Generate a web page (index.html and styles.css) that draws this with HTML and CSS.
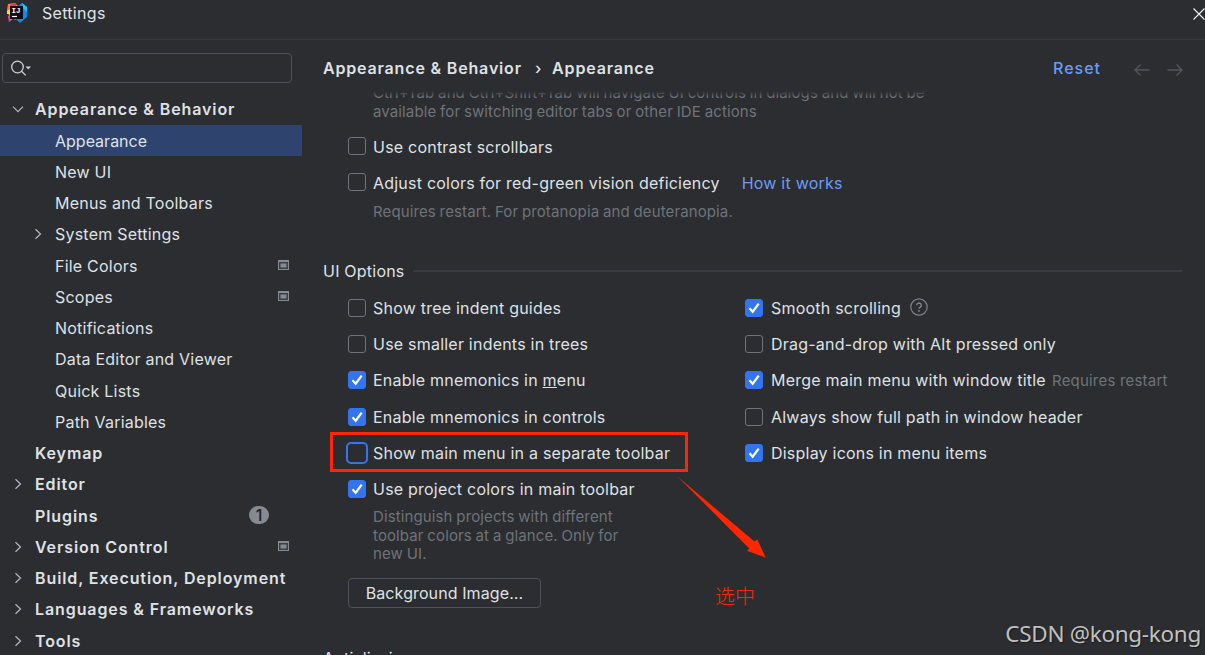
FILE: index.html
```html
<!DOCTYPE html>
<html lang="en">
<head>
    <meta charset="UTF-8">
    <meta name="viewport" content="width=device-width, initial-scale=1.0">
    <title>Settings</title>
    <link rel="stylesheet" href="styles.css">
</head>
<body>

<!-- shared icons -->
<svg class="defs" width="0" height="0">
    <symbol id="right" viewBox="0 0 16 16"><path d="M5.5 3.3 10.5 8 5.5 12.7" fill="none" stroke="#b4b8bf" stroke-width="1.2"/></symbol>
    <symbol id="down" viewBox="0 0 16 16"><path d="M3 5.7 8 10.7 13 5.7" fill="none" stroke="#b4b8bf" stroke-width="1.2"/></symbol>
    <symbol id="project" viewBox="0 0 11 10"><path d="M0 0h11v10H0z" fill="#868a91"/><path d="M1 2h9v7H1z" fill="#3c3f45"/><path d="M2.5 3.5h6v4h-6z" fill="#868a91"/></symbol>
</svg>

<header class="titlebar">
    <svg class="logo" width="20" height="21" viewBox="0 0 20 21">
        <path d="M1 2 8 1l4 4-4 11-6-2L0 8z" fill="#fd8224"/>
        <path d="M4 1 9 1v5H3z" fill="#fe2d72"/>
        <path d="M0 9l4-2v5H0z" fill="#fcdb54"/>
        <path d="M11 4 15 1l5 4v10l-7 6-4-4z" fill="#0b8cf0"/>
        <path d="M15 1l5 4v5l-4-4z" fill="#16c7f5"/>
        <path d="M1 14h9l-1 4-3-1-4 3z" fill="#f846b0"/>
        <path d="M3 4h13v13H3z" fill="#130c10"/>
        <path d="M5 14.500h5" stroke="#fff" stroke-width="1.200"/>
        <text class="logo-text" x="4.500" y="11">IJ</text>
    </svg>
    <span class="title">Settings</span>
    <svg class="close" width="12" height="12" viewBox="0 0 12 12"><path d="M.5.5l11 11M11.500.5l-11 11" stroke="#f0f0f0" stroke-width="1.100"/></svg>
</header>

<div class="window">
    <aside class="sidebar">
        <div class="search">
            <svg width="22" height="18" viewBox="0 0 22 18">
                <circle cx="6.500" cy="7" r="5.800" fill="none" stroke="#ced0d6" stroke-width="1.300"/>
                <path d="M10.500 11.200l4.200 4.200" stroke="#ced0d6" stroke-width="1.300"/>
                <path d="M14.500 6.500h5.500l-2.750 3z" fill="#ced0d6"/>
            </svg>
        </div>
        <ul class="tree">
            <li class="group"><svg class="arrow"><use href="#down"/></svg><span>Appearance &amp; Behavior</span></li>
            <li class="child selected"><span>Appearance</span></li>
            <li class="child"><span>New UI</span></li>
            <li class="child"><span>Menus and Toolbars</span></li>
            <li class="child"><svg class="arrow"><use href="#right"/></svg><span>System Settings</span></li>
            <li class="child"><span>File Colors</span><svg class="project"><use href="#project"/></svg></li>
            <li class="child"><span>Scopes</span><svg class="project"><use href="#project"/></svg></li>
            <li class="child"><span>Notifications</span></li>
            <li class="child"><span>Data Editor and Viewer</span></li>
            <li class="child"><span>Quick Lists</span></li>
            <li class="child"><span>Path Variables</span></li>
            <li class="group"><span>Keymap</span></li>
            <li class="group"><svg class="arrow"><use href="#right"/></svg><span>Editor</span></li>
            <li class="group"><span>Plugins</span><b class="count">1</b></li>
            <li class="group"><svg class="arrow"><use href="#right"/></svg><span>Version Control</span><svg class="project"><use href="#project"/></svg></li>
            <li class="group"><svg class="arrow"><use href="#right"/></svg><span>Build, Execution, Deployment</span></li>
            <li class="group"><svg class="arrow"><use href="#right"/></svg><span>Languages &amp; Frameworks</span></li>
            <li class="group"><svg class="arrow"><use href="#right"/></svg><span>Tools</span></li>
        </ul>
    </aside>

    <main class="page">
        <div class="crumbs">
            <span>Appearance &amp; Behavior</span>
            <span class="sep">›</span>
            <span>Appearance</span>
            <a class="reset" href="#">Reset</a>
            <svg class="nav-arrow" width="16" height="12" viewBox="0 0 16 12"><path d="M15.500 6H1M6.500.5 1 6l5.500 5.500" fill="none" stroke="#54565b" stroke-width="1.300"/></svg>
            <svg class="nav-arrow" width="16" height="12" viewBox="0 0 16 12"><path d="M.5 6H15M9.500.5 15 6l-5.500 5.500" fill="none" stroke="#54565b" stroke-width="1.300"/></svg>
        </div>

        <div class="scroll">
            <p class="hint">Ctrl+Tab and Ctrl+Shift+Tab will navigate UI controls in dialogs and will not be<br>available for switching editor tabs or other IDE actions</p>
            <div class="options top">
                <label class="option"><i class="box"></i><span>Use contrast scrollbars</span></label>
                <label class="option"><i class="box"></i><span>Adjust colors for red-green vision deficiency</span><a class="how" href="#">How it works</a></label>
            </div>
            <p class="hint restart">Requires restart. For protanopia and deuteranopia.</p>

            <h2>UI Options</h2>
            <div class="columns">
                <div class="options">
                    <label class="option"><i class="box"></i><span>Show tree indent guides</span></label>
                    <label class="option"><i class="box"></i><span>Use smaller indents in trees</span></label>
                    <label class="option"><i class="box on"></i><span>Enable mnemonics in <u>m</u>enu</span></label>
                    <label class="option"><i class="box on"></i><span>Enable mnemonics in controls</span></label>
                    <label class="option marked"><i class="box focus"></i><span>Show main menu in a separate toolbar</span></label>
                    <label class="option"><i class="box on"></i><span>Use project colors in main toolbar</span></label>
                </div>
                <div class="options">
                    <label class="option"><i class="box on"></i><span>Smooth scrolling</span>
                        <svg class="help" width="18" height="18" viewBox="0 0 18 18"><circle cx="9" cy="9" r="8.200" fill="none" stroke="#7d8187" stroke-width="1.200"/><path d="M6.700 7.200a2.300 2.200 0 1 1 3.500 1.900c-.8.500-1.200.8-1.200 1.700" fill="none" stroke="#868a91" stroke-width="1.300"/><circle cx="9" cy="12.900" r=".9" fill="#868a91"/></svg>
                    </label>
                    <label class="option"><i class="box"></i><span>Drag-and-drop with Alt pressed only</span></label>
                    <label class="option"><i class="box on"></i><span class="merge">Merge main menu with window title</span><small>Requires restart</small></label>
                    <label class="option"><i class="box"></i><span>Always show full path in window header</span></label>
                    <label class="option"><i class="box on"></i><span>Display icons in menu items</span></label>
                </div>
            </div>
            <p class="hint colors">Distinguish projects with different<br>toolbar colors at a glance. Only for<br>new UI.</p>
            <button class="background">Background Image...</button>
            <h2 class="next">Antialiasing</h2>
        </div>
    </main>
</div>

<!-- annotations over the dialog -->
<svg class="pointer" width="90" height="84" viewBox="0 0 90 84"><path d="M.5.5 77.500 65.500 80.300 63.300 88.700 81.700 69.900 74.700 72.300 72.500z" fill="#ff2600"/></svg>
<div class="note">选中</div>
<div class="watermark">CSDN @kong-kong</div>

</body>
</html>
```

FILE: styles.css
```css
* {
    box-sizing: border-box;
}
body {
    margin: 0;
    width: 1205px;
    height: 655px;
    overflow: hidden;
    position: relative;
    background-color: #2b2d30;
    color: #dfe1e5;
    font-family: Inter, "Noto Sans CJK SC", sans-serif;
    font-size: 16px;
    letter-spacing: 0.22px;
    white-space: nowrap;
}
svg {
    display: block;
    flex: none;
}
a {
    color: #6b9bfa;
    text-decoration: none;
}
.defs {
    position: absolute;
}
.titlebar {
    height: 40px;
    padding: 2px 0 0 7px;
    display: flex;
    align-items: flex-start;
    border-bottom: 1px solid #393b40;
}
.logo-text {
    fill: #fff;
    font: bold 7.5px "Liberation Mono", monospace;
    letter-spacing: 0;
}
.title {
    margin-left: 15px;
    line-height: 23px;
    letter-spacing: 0.3px;
}
.close {
    margin: 6px 0 0 auto;
}
.window {
    display: flex;
    height: 615px;
}

/* tree */
.sidebar {
    width: 302px;
    flex: none;
    padding-top: 13px;
    overflow: hidden;
}
.search {
    width: 290px;
    height: 30px;
    margin-left: 2px;
    padding: 6px 8px;
    border: 1px solid #4e5157;
    border-radius: 4px;
}
.tree {
    list-style: none;
    margin: 10.75px 0 0;
    padding: 0;
}
.tree li {
    height: 31.25px;
    display: flex;
    align-items: center;
}
.tree .group {
    padding-left: 35px;
    font-weight: 600;
    letter-spacing: 0.9px;
}
.tree .child {
    padding-left: 55px;
}
.tree .selected {
    background-color: #2e436e;
    letter-spacing: 0;
}
.arrow {
    width: 16px;
    height: 16px;
    margin-left: -25px;
    margin-right: 9px;
}
.project {
    width: 11px;
    height: 10px;
    margin: 0 13px 1px auto;
}
.count {
    width: 20px;
    height: 18px;
    margin: 0 33px 2px auto;
    border-radius: 9px;
    background-color: #868a91;
    color: #1e1f22;
    font-weight: 500;
    line-height: 19px;
    letter-spacing: 0;
    text-align: center;
}

/* settings page */
.page {
    flex: 1;
    padding-left: 21px;
    display: flex;
    flex-direction: column;
}
.crumbs {
    height: 51px;
    padding: 5px 22px 0 0;
    display: flex;
    align-items: center;
    font-weight: 600;
    letter-spacing: 0.83px;
}
.sep {
    margin: 0 10px 0 13px;
    font-weight: 500;
}
.reset {
    margin-left: auto;
    margin-right: 17px;
    font-weight: 500;
    letter-spacing: 1px;
}
.nav-arrow {
    margin: 4px 0 0 16px;
}
.nav-arrow:last-child {
    margin-left: 17px;
}
.scroll {
    flex: 1;
    position: relative;
    overflow: hidden;
}
.scroll::before {
    content: "";
    position: absolute;
    top: 0;
    left: 0;
    right: 0;
    height: 6px;
    background: linear-gradient(#2b2d30, rgba(43, 45, 48, 0));
}
.hint {
    margin: -7px 0 0 50px;
    color: #6f737a;
    font-size: 15px;
    line-height: 18.5px;
    letter-spacing: 0.12px;
    word-spacing: -0.6px;
}
.options {
    display: flex;
    flex-direction: column;
    padding-left: 25px;
}
.top {
    margin-top: 8px;
}
.option {
    height: 36.2px;
    display: flex;
    align-items: center;
}
.box {
    width: 18px;
    height: 18px;
    flex: none;
    margin-right: 7px;
    border: 1px solid #6f737a;
    border-radius: 3px;
}
.top .box {
    margin-bottom: 2px;
}
.on {
    border-color: #3574f0;
    background: #3574f0 url("data:image/svg+xml,%3Csvg xmlns='http://www.w3.org/2000/svg' viewBox='0 0 16 16'%3E%3Cpath d='M3.500 8.300l3.200 3.400L12.700 3.600' fill='none' stroke='white' stroke-width='2.200'/%3E%3C/svg%3E") center / 16px 16px;
}
.focus {
    width: 22px;
    height: 22px;
    margin: 0 5px 0 -2px;
    border: 2px solid #3574f0;
    border-radius: 5px;
}
.marked {
    position: relative;
}
.marked::after {
    content: "";
    box-sizing: border-box;
    position: absolute;
    left: -18px;
    top: -3px;
    width: 358px;
    height: 40px;
    border: 3px solid #ff2600;
}
.how {
    margin-left: 22px;
}
.restart {
    margin-top: 2px;
}
h2 {
    margin: 38px 23px 0 0;
    height: 22px;
    display: flex;
    align-items: center;
    gap: 8px;
    font-size: 16px;
    font-weight: 400;
}
h2::after {
    content: "";
    flex: 1;
    height: 2px;
    background-color: #393b40;
}
.columns {
    margin-top: 8px;
    display: grid;
    grid-template-columns: 397px 1fr;
}
.columns .options + .options .box {
    margin-right: 8px;
}
.help {
    margin: 0 0 2px 9px;
}
.option small {
    margin-left: 8px;
    color: #6f737a;
    font-size: 15px;
    letter-spacing: 0.2px;
}
.merge {
    width: 273px;
}
.colors {
    margin-top: 1px;
}
.background {
    display: block;
    width: 193px;
    height: 30px;
    margin: 14px 0 0 25px;
    padding: 0;
    border: 1px solid #4e5157;
    border-radius: 4px;
    background: none;
    color: #dfe1e5;
    font: inherit;
    letter-spacing: 0.1px;
}
.next {
    margin-top: 39px;
}

/* annotations */
.pointer {
    position: absolute;
    left: 677px;
    top: 476px;
}
.note {
    position: absolute;
    left: 715px;
    top: 584px;
    color: #ff2600;
    font-family: "Noto Sans CJK SC", sans-serif;
    font-size: 20px;
    font-weight: 300;
    line-height: 24px;
    letter-spacing: 0;
}
.watermark {
    position: absolute;
    right: 4px;
    bottom: 5px;
    color: #c0c0c0;
    font-family: "Noto Sans", sans-serif;
    font-size: 22.5px;
    line-height: 32px;
    letter-spacing: -0.3px;
    text-shadow: 1px 1px 1px #1a1a1a;
}
```
